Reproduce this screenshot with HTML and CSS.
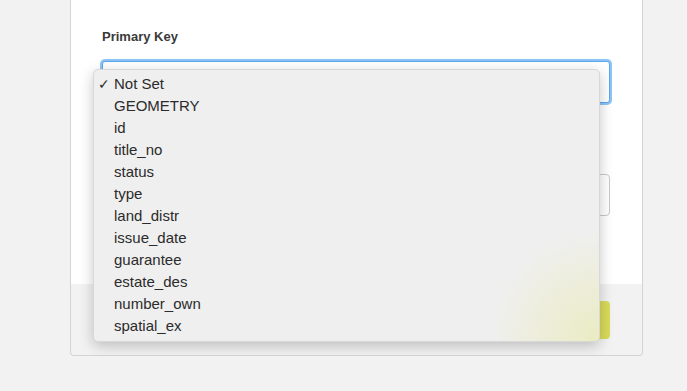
FILE: index.html
```html
<!DOCTYPE html>
<html>
<head>
    <title>Layer Settings</title>
    <link rel="stylesheet" href="styles.css">
</head>
<body>
    <div class="panel">
        <div class="panel-body">
            <div class="field">
                <label class="field-label">Primary Key</label>
                <div class="select focused"></div>
            </div>
            <div class="field">
                <div class="select"></div>
            </div>
        </div>
        <div class="panel-footer">
            <button class="save-btn"></button>
        </div>

        <!-- open select menu -->
        <ul class="menu">
            <li class="checked">Not Set</li>
            <li>GEOMETRY</li>
            <li>id</li>
            <li>title_no</li>
            <li>status</li>
            <li>type</li>
            <li>land_distr</li>
            <li>issue_date</li>
            <li>guarantee</li>
            <li>estate_des</li>
            <li>number_own</li>
            <li>spatial_ex</li>
        </ul>
    </div>
</body>
</html>
```

FILE: styles.css
```css
* {
    margin: 0;
    padding: 0;
    box-sizing: border-box;
}

body {
    font-family: "Liberation Sans", Arial, sans-serif;
    background-color: #f2f2f2;
    color: #333;
}

.panel {
    position: relative;
    width: 573px;
    margin-left: 70px;
    background-color: #f2f2f2;
    border: 1px solid #d4d4d4;
    border-top: none;
    border-radius: 0 0 4px 4px;
}

.panel-body {
    background-color: white;
    padding: 29px 32px 68px 31px;
    display: flex;
    flex-direction: column;
    gap: 71px;
}

.field-label {
    display: block;
    font-size: 13px;
    font-weight: bold;
    color: #3a3a3a;
    margin-bottom: 17px;
}

.select {
    height: 42px;
    border: 1px solid #c9c9c9;
    border-radius: 4px;
    background-color: white;
}

.select.focused {
    border: 1px solid #5aa8ee;
    box-shadow: 0 0 0 2px #8ec4f5;
    border-radius: 3px;
}

.panel-footer {
    height: 71px;
    display: flex;
    justify-content: flex-end;
    align-items: center;
    padding-right: 32px;
}

.save-btn {
    width: 110px;
    height: 38px;
    background-color: #d9db5a;
    border: none;
    border-radius: 4px;
}

/* native-looking dropdown list */
.menu {
    position: absolute;
    left: 22px;
    top: 69px;
    width: 507px;
    height: 273px;
    list-style: none;
    padding: 3px 0 6px;
    background-color: #efefef;
    background-image: radial-gradient(circle at 100% 100%, rgba(230, 232, 150, 0.5), rgba(239, 239, 239, 0) 110px);
    border: 1px solid #d8d8d8;
    border-radius: 5px;
    box-shadow: 0 4px 14px rgba(0, 0, 0, 0.22);
    font-size: 15px;
    color: #2b2b2b;
}

.menu li {
    height: 22px;
    line-height: 22px;
    padding-left: 20px;
    position: relative;
}

.menu li.checked::before {
    content: "\2713";
    position: absolute;
    left: 4px;
    font-size: 14px;
}
```
